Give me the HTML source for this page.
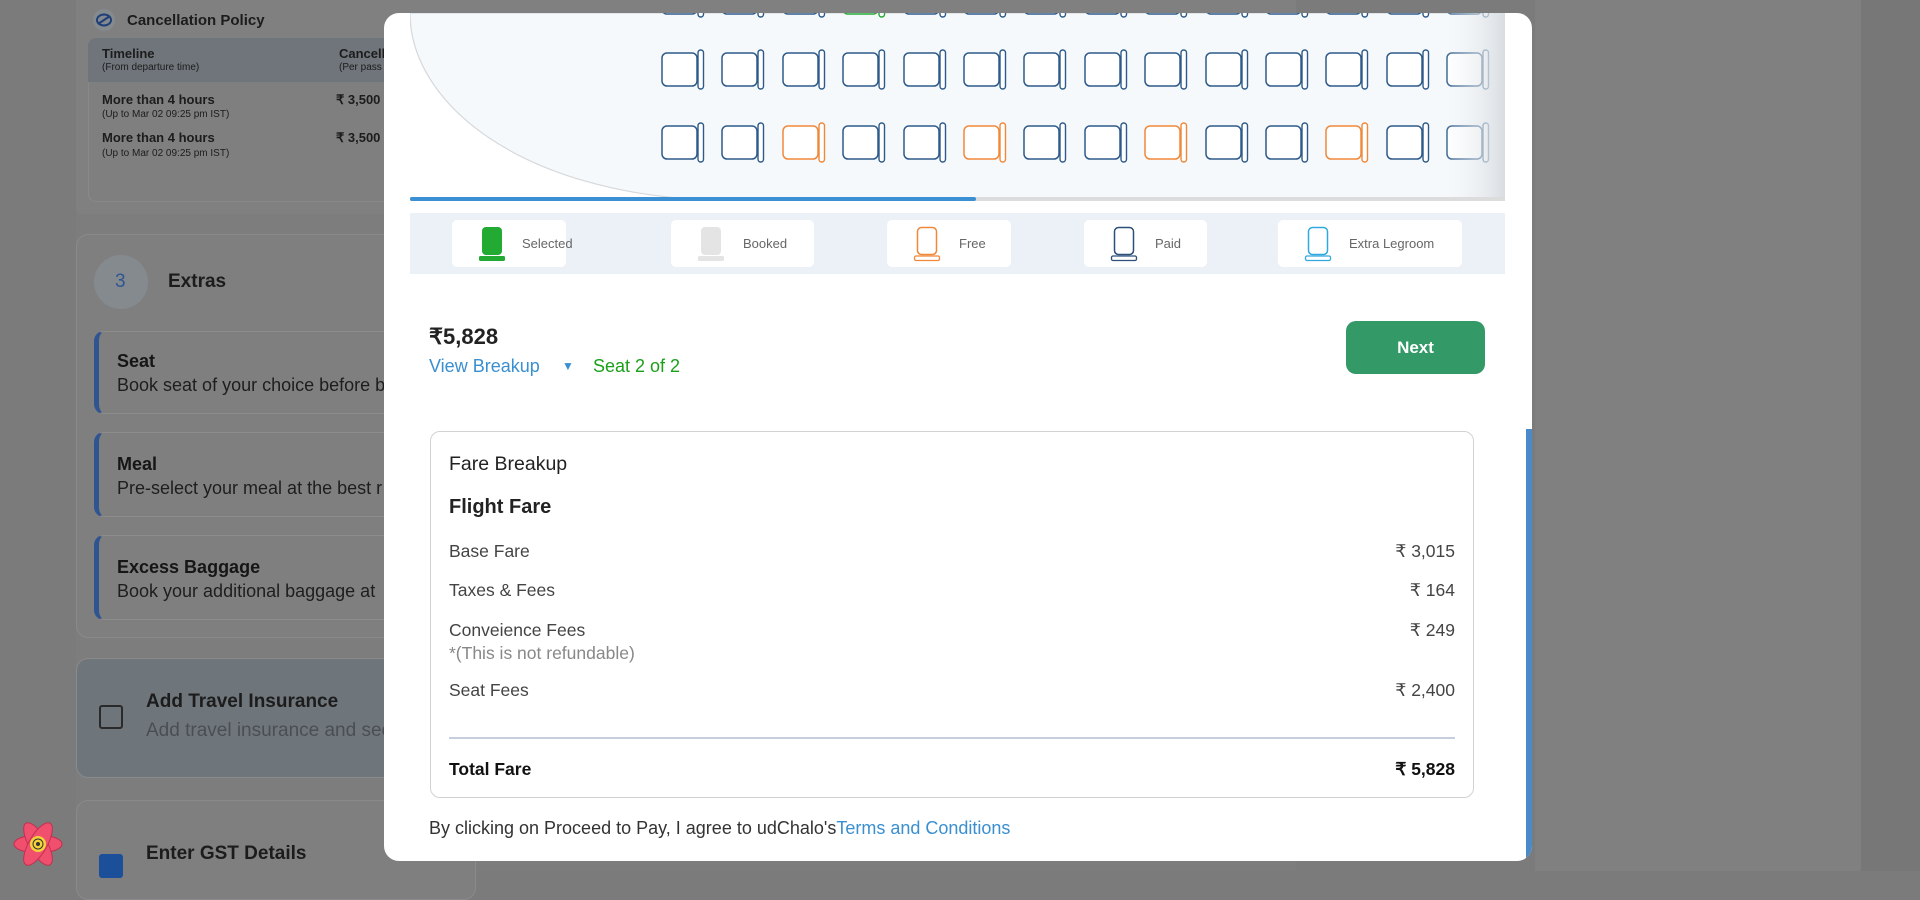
<!DOCTYPE html>
<html><head><meta charset="utf-8">
<style>
*{box-sizing:border-box;margin:0;padding:0}
body{width:1920px;height:871px;overflow:hidden;background:#7b7b7b;font-family:"Liberation Sans",sans-serif;position:relative}
.abs{position:absolute}
.lt{color:#1c1c1c}
.card{position:absolute;border:1px solid #8a8a8a;border-radius:12px;background:#7f7f7f}
.ext{position:absolute;left:94px;width:320px;border:1px solid #8c8c8c;border-left:5px solid #2f5590;border-radius:10px;background:#7f7f7f}
.ext b{position:absolute;left:18px;font-size:18px;color:#161616}
.ext span{position:absolute;left:18px;font-size:18px;color:#1e1e1e;white-space:nowrap}
.modal{position:absolute;left:384px;top:13px;width:1148px;height:848px;background:#fff;border-radius:15px;overflow:hidden}
.leg{position:absolute;top:7px;height:47px;background:#fff;border-radius:5px;font-size:13px;color:#666}
.leg svg{position:absolute;left:26px;top:6px}
.leg span{position:absolute;top:16px}
.row{position:absolute;left:-18px;width:1044px;font-size:17.5px;color:#444}
.row .v{position:absolute;right:0;top:0}
</style></head><body>
<div class="abs" style="left:76px;top:0;width:1220px;height:871px;background:#7d7d7d"></div>
<div class="abs" style="left:76px;top:0;width:1220px;height:214px;background:#808080;border-radius:0 0 6px 6px"></div>
<svg class="abs" style="left:92px;top:8px" width="24" height="24" viewBox="0 0 24 24"><circle cx="12" cy="12" r="11" fill="#858a8f"/><ellipse cx="12" cy="12" rx="7" ry="5.5" fill="none" stroke="#1f3f78" stroke-width="2"/><line x1="6" y1="16" x2="18" y2="8" stroke="#1f3f78" stroke-width="2"/></svg>
<div class="abs lt" style="left:127px;top:12px;font-size:15px;font-weight:bold">Cancellation Policy</div>
<div class="abs" style="left:88px;top:38px;width:320px;height:164px;border:1px solid #898989;border-radius:8px;background:#7f7f7f"></div>
<div class="abs" style="left:88px;top:38px;width:320px;height:44px;background:#6f757a;border-radius:8px 0 0 0"></div>
<div class="abs lt" style="left:102px;top:46px;font-size:13px;font-weight:bold">Timeline</div>
<div class="abs lt" style="left:102px;top:62px;font-size:10px">(From departure time)</div>
<div class="abs lt" style="left:339px;top:46px;font-size:13px;font-weight:bold">Cancell</div>
<div class="abs lt" style="left:339px;top:62px;font-size:10px">(Per pass</div>
<div class="abs lt" style="left:102px;top:92px;font-size:13px;font-weight:bold">More than 4 hours</div>
<div class="abs lt" style="left:102px;top:109px;font-size:10px">(Up to Mar 02 09:25 pm IST)</div>
<div class="abs lt" style="left:336px;top:92px;font-size:13px;font-weight:bold">₹ 3,500</div>
<div class="abs lt" style="left:102px;top:130px;font-size:13px;font-weight:bold">More than 4 hours</div>
<div class="abs lt" style="left:102px;top:148px;font-size:10px">(Up to Mar 02 09:25 pm IST)</div>
<div class="abs lt" style="left:336px;top:130px;font-size:13px;font-weight:bold">₹ 3,500</div>

<div class="card" style="left:76px;top:234px;width:400px;height:404px"></div>
<div class="abs" style="left:94px;top:255px;width:54px;height:54px;border-radius:50%;background:#858a8f"></div>
<div class="abs" style="left:115px;top:271px;font-size:19px;color:#2f5590">3</div>
<div class="abs lt" style="left:168px;top:271px;font-size:19px;font-weight:bold">Extras</div>
<div class="ext" style="top:331px;height:83px"><b style="top:19px">Seat</b><span style="top:43px">Book seat of your choice before b</span></div>
<div class="ext" style="top:432px;height:85px"><b style="top:21px">Meal</b><span style="top:45px">Pre-select your meal at the best r</span></div>
<div class="ext" style="top:535px;height:85px"><b style="top:21px">Excess Baggage</b><span style="top:45px">Book your additional baggage at</span></div>

<div class="abs" style="left:76px;top:658px;width:400px;height:120px;background:#6f767b;border:1px solid #8a8a8a;border-radius:12px"></div>
<div class="abs" style="left:99px;top:705px;width:24px;height:24px;border:2px solid #2a2a2a;border-radius:3px"></div>
<div class="abs lt" style="left:146px;top:691px;font-size:19px;font-weight:bold">Add Travel Insurance</div>
<div class="abs" style="left:146px;top:720px;font-size:19px;color:#4a4e52">Add travel insurance and secu</div>
<div class="card" style="left:76px;top:800px;width:400px;height:100px"></div>
<div class="abs" style="left:99px;top:854px;width:24px;height:24px;background:#1c4f9a;border-radius:3px"></div>
<div class="abs lt" style="left:146px;top:843px;font-size:19px;font-weight:bold">Enter GST Details</div>
<svg class="abs" style="left:12px;top:820px" width="52" height="48" viewBox="0 0 52 48"><g fill="#f0506e" stroke="#c23050" stroke-width="1"><ellipse cx="26" cy="24" rx="24" ry="9"/><ellipse cx="26" cy="24" rx="24" ry="9" transform="rotate(60 26 24)"/><ellipse cx="26" cy="24" rx="24" ry="9" transform="rotate(-60 26 24)"/></g><circle cx="26" cy="24" r="8" fill="#f5d23a"/><circle cx="26" cy="24" r="5" fill="none" stroke="#333" stroke-width="1"/><circle cx="26" cy="24" r="2" fill="#333"/></svg>

<div class="abs" style="left:1535px;top:0;width:326px;height:871px;background:#808080"></div>
<div class="abs" style="left:1861px;top:0;width:59px;height:871px;background:#777"></div>

<div class="modal">
 <div class="abs" style="left:26px;top:0;width:1095px;height:187px;overflow:hidden;background:#fff">
  <svg class="abs" style="left:0;top:0" width="1095" height="187"><defs><linearGradient id="sg" x1="0" x2="1"><stop offset="0" stop-color="#f6f9fb" stop-opacity="0"/><stop offset="1" stop-color="#d9dde1"/></linearGradient></defs>
   <path d="M0,0 C0,90 110,180 300,187 L1095,187 L1095,0 Z" fill="#f6f9fb" stroke="#d6d9dc" stroke-width="1.2"/>
  </svg>
  <div id="seats"></div>
  <svg class="abs" style="left:0;top:0" width="1095" height="187"><rect x="1030" y="0" width="65" height="187" fill="url(#sg2)"/><defs><linearGradient id="sg2" x1="0" x2="1"><stop offset="0" stop-color="#f6f9fb" stop-opacity="0"/><stop offset="1" stop-color="#d9dde1"/></linearGradient></defs></svg>
 </div>
 <div class="abs" style="left:26px;top:184px;width:1095px;height:4px;background:#dcdcdc"></div>
 <div class="abs" style="left:26px;top:184px;width:566px;height:4px;background:#3a90d2;border-radius:2px"></div>
 <div class="abs" style="left:26px;top:200px;width:1095px;height:61px;background:#ebf1f7">
  <div class="leg" style="left:42px;width:114px"><svg width="28" height="36"><rect x="4" y="1" width="20" height="28" rx="4" fill="#22aa33"/><rect x="1" y="30" width="26" height="5" rx="1.5" fill="#22aa33"/></svg><span style="left:70px">Selected</span></div>
  <div class="leg" style="left:261px;width:143px"><svg width="28" height="36"><rect x="4" y="1" width="20" height="28" rx="4" fill="#e4e4e4"/><rect x="1" y="30" width="26" height="5" rx="1.5" fill="#e4e4e4"/></svg><span style="left:72px">Booked</span></div>
  <div class="leg" style="left:477px;width:124px"><svg width="28" height="36"><rect x="4.5" y="1.5" width="19" height="27" rx="4" fill="#fff" stroke="#f0883a" stroke-width="1.5"/><rect x="1.5" y="30" width="25" height="4.5" rx="1.5" fill="#fff" stroke="#f0883a" stroke-width="1.3"/></svg><span style="left:72px">Free</span></div>
  <div class="leg" style="left:674px;width:123px"><svg width="28" height="36"><rect x="4.5" y="1.5" width="19" height="27" rx="4" fill="#fff" stroke="#2d4f7a" stroke-width="1.5"/><rect x="1.5" y="30" width="25" height="4.5" rx="1.5" fill="#fff" stroke="#2d4f7a" stroke-width="1.3"/></svg><span style="left:71px">Paid</span></div>
  <div class="leg" style="left:868px;width:184px"><svg width="28" height="36"><rect x="4.5" y="1.5" width="19" height="27" rx="4" fill="#fff" stroke="#33a8e0" stroke-width="1.5"/><rect x="1.5" y="30" width="25" height="4.5" rx="1.5" fill="#fff" stroke="#33a8e0" stroke-width="1.3"/></svg><span style="left:71px">Extra Legroom</span></div>
 </div>

 <div class="abs" style="left:45px;top:311px;font-size:22px;font-weight:bold;color:#222">₹5,828</div>
 <div class="abs" style="left:45px;top:343px;font-size:18px;color:#3a8fd0">View Breakup</div>
 <div class="abs" style="left:178px;top:346px;font-size:12px;color:#3a8fd0">▼</div>
 <div class="abs" style="left:209px;top:343px;font-size:18px;color:#1aa01a">Seat 2 of 2</div>
 <div class="abs" style="left:962px;top:308px;width:139px;height:53px;background:#339966;border-radius:10px;color:#fff;font-weight:bold;font-size:17px;text-align:center;line-height:53px">Next</div>

 <div class="abs" style="left:46px;top:418px;width:1044px;height:367px;border:1px solid #d2d2d2;border-radius:10px">
  <div class="abs" style="left:18px;top:21px;font-size:19.5px;color:#222">Fare Breakup</div>
  <div class="abs" style="left:18px;top:64px;font-size:20px;font-weight:bold;color:#222">Flight Fare</div>
  <div class="row" style="left:18px;top:109px;width:1006px">Base Fare<span class="v">₹ 3,015</span></div>
  <div class="row" style="left:18px;top:148px;width:1006px">Taxes &amp; Fees<span class="v">₹ 164</span></div>
  <div class="row" style="left:18px;top:188px;width:1006px">Conveience Fees<span class="v">₹ 249</span></div>
  <div class="row" style="left:18px;top:211px;width:1006px;color:#888">*(This is not refundable)</div>
  <div class="row" style="left:18px;top:248px;width:1006px">Seat Fees<span class="v">₹ 2,400</span></div>
  <div class="abs" style="left:18px;top:305px;width:1006px;height:2px;background:#c5d0dc"></div>
  <div class="row" style="left:18px;top:327px;width:1006px;font-weight:bold;color:#111">Total Fare<span class="v">₹ 5,828</span></div>
 </div>
 <div class="abs" style="left:45px;top:805px;font-size:18px;color:#333">By clicking on Proceed to Pay, I agree to udChalo's<span style="color:#3a8fd0">Terms and Conditions</span></div>
 <div class="abs" style="left:1142px;top:416px;width:6px;height:440px;background:#4a8ac8"></div>
</div>
<script>
(function(){
 var h='';var x0=251,p=60.4;
 function seat(x,y,c){return '<svg class="abs" style="left:'+x+'px;top:'+y+'px" width="44" height="42"><rect x="1" y="4" width="35" height="33" rx="5" fill="#fff" stroke="'+c+'" stroke-width="1.5"/><rect x="37" y="1" width="5.5" height="39" rx="2.7" fill="#fff" stroke="'+c+'" stroke-width="1.4"/></svg>';}
 for(var i=0;i<14;i++){
  var x=x0+i*p;
  h+=seat(x,-36,i==3?'#22aa33':'#2d5a8a');
  h+=seat(x,36,'#2d5a8a');
  h+=seat(x,109,(i==2||i==5||i==8||i==11)?'#f0883a':'#2d5a8a');
 }
 document.getElementById('seats').innerHTML=h;
})();
</script>
</body></html>
